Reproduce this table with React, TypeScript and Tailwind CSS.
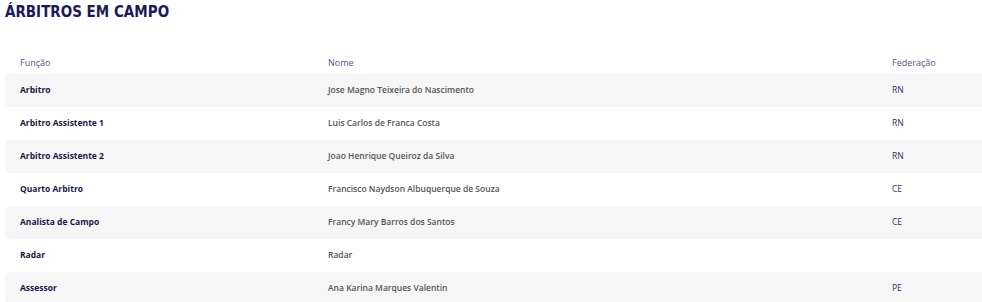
import React from "react";

type Arbitro = { funcao: string; nome: string; federacao: string };

const arbitros: Arbitro[] = [
  { funcao: "Arbitro", nome: "Jose Magno Teixeira do Nascimento", federacao: "RN" },
  { funcao: "Arbitro Assistente 1", nome: "Luis Carlos de Franca Costa", federacao: "RN" },
  { funcao: "Arbitro Assistente 2", nome: "Joao Henrique Queiroz da Silva", federacao: "RN" },
  { funcao: "Quarto Arbitro", nome: "Francisco Naydson Albuquerque de Souza", federacao: "CE" },
  { funcao: "Analista de Campo", nome: "Francy Mary Barros dos Santos", federacao: "CE" },
  { funcao: "Radar", nome: "Radar", federacao: "" },
  { funcao: "Assessor", nome: "Ana Karina Marques Valentin", federacao: "PE" },
];

const cols = "grid grid-cols-[308px_564px_1fr] items-center pl-[15px]";

export default function App() {
  return (
    <div className="w-[982px] h-[302px] overflow-hidden bg-white pl-[5px] font-['Open_Sans',sans-serif]">
      <h2 className="pt-[3px] text-[15px] leading-[18px] font-bold font-stretch-condensed text-[#1c1a5a] font-['DejaVu_Sans',sans-serif]">
        ÁRBITROS EM CAMPO
      </h2>

      <div className={`${cols} mt-[33px] h-[18px] text-[9px] text-[#56548a]`}>
        <span>Função</span>
        <span>Nome</span>
        <span>Federação</span>
      </div>

      <div className="mt-[2px] flex flex-col">
        {arbitros.map((a, i) => (
          <div
            key={a.funcao}
            className={`${cols} h-[33px] rounded-l-[5px] text-[8.5px] ${
              i % 2 === 0 ? "bg-[#f6f6f6]" : "bg-white"
            }`}
          >
            <span className="font-bold text-[#181848]">{a.funcao}</span>
            <span className="font-semibold text-[#555555]">{a.nome}</span>
            <span className="text-[#2d2b6b]">{a.federacao}</span>
          </div>
        ))}
      </div>
    </div>
  );
}
